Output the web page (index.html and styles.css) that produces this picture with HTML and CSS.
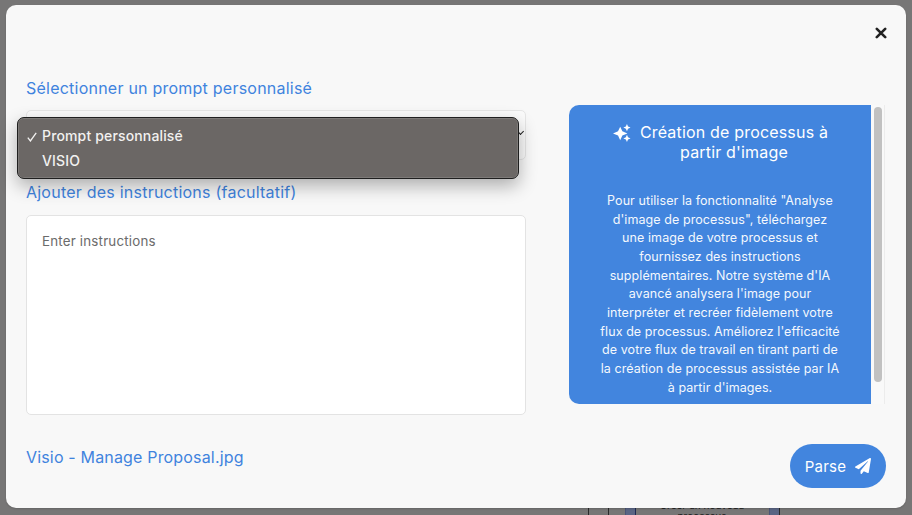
FILE: index.html
```html
<!DOCTYPE html>
<html lang="fr">
<head>
<meta charset="utf-8">
<title>Création de processus</title>
<link rel="stylesheet" href="styles.css">
</head>
<body>
<div class="behind">
  <div class="line l1"></div><div class="line l2"></div>
  <div class="chip c1"></div>
  <div class="behind-text">Créer un nouveau<br>processus</div>
  <div class="chip c2"></div>
  <div class="line l3"></div>
</div>
<main class="modal">
  <header class="modal-head">
    <svg class="close" viewBox="0 0 12 12" width="12" height="12" aria-hidden="true"><path d="M1.8 1.8 10.2 10.2M10.2 1.8 1.8 10.2" stroke="#222" stroke-width="2.6" stroke-linecap="round"/></svg>
  </header>
  <div class="columns">
    <section class="left">
      <h2 class="label first">Sélectionner un prompt personnalisé</h2>
      <div class="select-wrap">
        <div class="select"><span class="caret"></span></div>
        <div class="menu">
          <div class="opt"><svg class="check" viewBox="0 0 10 10" width="10" height="10" aria-hidden="true"><path d="M.8 5.600 3.400 9 9.200.8" fill="none" stroke="#f2f1f0" stroke-width="1.300"/></svg>Prompt personnalisé</div>
          <div class="opt">VISIO</div>
        </div>
      </div>
      <h2 class="label second">Ajouter des instructions (facultatif)</h2>
      <div class="textarea">Enter instructions</div>
    </section>
    <aside class="right">
      <div class="panel">
        <h3 class="panel-title">
          <svg class="sparkle" viewBox="0 0 20 20" width="18" height="18" aria-hidden="true"><path fill="#fff" d="M8 3 10.400 8.100 16 10.500 10.400 12.900 8 18 5.600 12.900 0 10.500 5.600 8.100zM15.500 0l1.200 2.800 2.800 1.200-2.800 1.200-1.200 2.800-1.200-2.800-2.800-1.200 2.800-1.200zM15.500 12l1.200 2.800 2.800 1.200-2.800 1.200-1.200 2.800-1.200-2.800-2.800-1.200 2.800-1.200z"/></svg>
          <span>Création de processus à partir d'image</span>
        </h3>
        <p class="panel-text">Pour utiliser la fonctionnalité "Analyse<br>d'image de processus", téléchargez<br>une image de votre processus et<br>fournissez des instructions<br>supplémentaires. Notre système d'IA<br>avancé analysera l'image pour<br>interpréter et recréer fidèlement votre<br>flux de processus. Améliorez l'efficacité<br>de votre flux de travail en tirant parti de<br>la création de processus assistée par IA<br>à partir d'images.</p>
      </div>
      <div class="scrollbar"><div class="thumb"></div></div>
    </aside>
  </div>
  <footer class="foot">
    <span class="file">Visio - Manage Proposal.jpg</span>
    <button class="parse">Parse
      <svg viewBox="0 0 512 512" width="16" height="16" aria-hidden="true"><path fill="#fff" d="M476 3.200 12.500 270.600c-18.100 10.400-15.800 35.600 2.200 43.200L121 358.400l287.300-253.200c5.500-4.900 13.300 2.600 8.600 8.300L176 407v80.500c0 23.600 28.500 32.900 42.500 15.800L282 426l124.600 52.200c14.200 6 30.400-2.900 33-18.200l72-432C515 7.800 493.300-6.800 476 3.200z"/></svg>
    </button>
  </footer>
</main>
</body>
</html>
```
FILE: styles.css
```css
* { box-sizing: border-box; }
html, body { margin: 0; height: 100%; }
body {
  width: 912px;
  height: 515px;
  overflow: hidden;
  background: #777676;
  padding: 5px 6px 0;
  font-family: Inter, "Liberation Sans", sans-serif;
  position: relative;
}
.behind { position: absolute; left: 0; top: 508px; width: 912px; height: 7px; overflow: hidden; }
.line { position: absolute; top: 0; width: 1px; height: 7px; background: #2b2b2b; }
.l1 { left: 588px; }
.l2 { left: 608px; }
.l3 { left: 779px; }
.chip { position: absolute; top: 0; width: 11px; height: 7px; background: #5a6584; border-right: 1px solid #1e2a55; border-left: 1px solid #4a5578; }
.c1 { left: 625px; }
.c2 { left: 769px; }
.behind-text { position: absolute; left: 637px; top: -8px; width: 130px; text-align: center; font-size: 10px; line-height: 11px; color: #1d1d1d; }
.modal {
  position: relative;
  width: 900px;
  height: 503px;
  background: #f8f8f8;
  border-radius: 10px;
  padding: 0 20px;
  display: flex;
  flex-direction: column;
  box-shadow: 0 1px 2px rgba(0,0,0,.15);
}
.modal-head { height: 100px; display: flex; justify-content: flex-end; padding: 22px 0 0; flex: none; }
.close { margin-right: -1px; }
.columns { display: flex; height: 300px; flex: none; }
.left { width: 500px; position: relative; }
.label { margin: 0; font-size: 16px; font-weight: 400; line-height: 20px; letter-spacing: .23px; color: #3f83de; }
.first { margin-top: -27px; }
.select-wrap { position: relative; margin-top: 12px; }
.select { height: 50px; background: #fbfbfb; border: 1px solid #e6e6e6; border-radius: 5px; position: relative; }
.caret { position: absolute; right: 2px; top: 18px; width: 5px; height: 5px; border-right: 1.5px solid #222; border-bottom: 1.5px solid #222; transform: rotate(45deg); }
.menu {
  position: absolute;
  left: -9px;
  top: 7px;
  width: 502px;
  height: 62px;
  background: #6b6765;
  border: 1px solid #1f1f1f;
  border-radius: 7px;
  box-shadow: 0 0 0 .5px rgba(255,255,255,.25) inset, 0 7px 18px rgba(0,0,0,.3);
  padding: 6px 0 0 24px;
  color: #f2f1f0;
  font-size: 14px;
  line-height: 24.500px;
  letter-spacing: .15px;
  font-weight: 500;
}
.opt { position: relative; }
.check { position: absolute; left: -15px; top: 8px; }
.second { margin-top: 22px; }
.textarea {
  margin-top: 13px;
  height: 200px;
  background: #fff;
  border: 1px solid #e3e3e3;
  border-radius: 5px;
  padding: 15px 15px;
  font-size: 13.330px;
  letter-spacing: .2px;
  line-height: 20px;
  color: #6b6b6b;
}
.right { margin-left: 43px; width: 316px; display: flex; }
.panel {
  width: 302px;
  height: 299px;
  background: #4285de;
  border-radius: 10px 0 0 10px;
  padding: 18px 26px 0;
  color: #fff;
  flex: none;
}
.panel-title {
  margin: 0 0 30px;
  display: flex;
  justify-content: center;
  align-items: flex-start;
  gap: 5px;
  font-size: 16px;
  font-weight: 400;
  line-height: 19.500px;
  letter-spacing: .18px;
  text-align: center;
}
.panel-title span { width: 196px; }
.sparkle { flex: none; margin: 1px 0 0 5px; }
.panel-text {
  margin: 0;
  font-size: 12.500px;
  line-height: 18.650px;
  letter-spacing: .08px;
  text-align: center;
  color: #f4f8fd;
}
.scrollbar { width: 14px; height: 299px; padding: 2px 3px; border-right: 1px solid #ececec; background: #f9f9f9; }
.thumb { width: 8px; height: 275px; background: #c1c1c1; border-radius: 4px; }
.foot { flex: 1; display: flex; justify-content: space-between; align-items: flex-start; padding-top: 39px; }
.file { font-size: 16px; line-height: 22px; letter-spacing: .17px; color: #3f83de; margin-top: 2px; }
.parse {
  width: 96px;
  height: 44px;
  border: 0;
  border-radius: 22px;
  background: #4285de;
  color: #fff;
  font: 400 15px Inter, "Liberation Sans", sans-serif;
  letter-spacing: .2px;
  display: flex;
  align-items: center;
  justify-content: center;
  gap: 9px;
  padding: 0;
}
```
